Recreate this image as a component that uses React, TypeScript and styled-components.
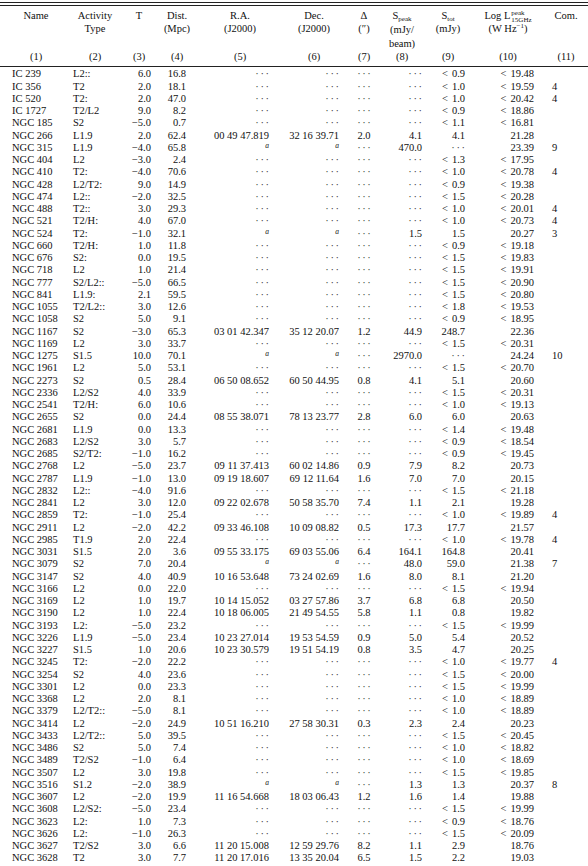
import React from 'react';
import styled, { createGlobalStyle } from 'styled-components';

const COLS = '60px 58px 30px 46px 80px 68px 32px 44px 48px 72px 44px';

type Align = 'left' | 'right' | 'center';

// alignment and inner padding of each data column
const CELLS: { align: Align; pad: number }[] = [
  { align: 'left', pad: 6 },
  { align: 'left', pad: 7 },
  { align: 'right', pad: 3 },
  { align: 'right', pad: 14 },
  { align: 'right', pad: 11 },
  { align: 'right', pad: 9 },
  { align: 'center', pad: 0 },
  { align: 'right', pad: 2 },
  { align: 'right', pad: 7 },
  { align: 'right', pad: 10 },
  { align: 'left', pad: 8 },
];

// "-" = no value (dots), "a" = footnote a
const ROWS: string[] = [
  'IC 239|L2::|6.0|16.8|-|-|-|-|< 0.9|< 19.48|',
  'IC 356|T2|2.0|18.1|-|-|-|-|< 1.0|< 19.59|4',
  'IC 520|T2:|2.0|47.0|-|-|-|-|< 1.0|< 20.42|4',
  'IC 1727|T2/L2|9.0|8.2|-|-|-|-|< 0.9|< 18.86|',
  'NGC 185|S2|−5.0|0.7|-|-|-|-|< 1.1|< 16.81|',
  'NGC 266|L1.9|2.0|62.4|00 49 47.819|32 16 39.71|2.0|4.1|4.1|21.28|',
  'NGC 315|L1.9|−4.0|65.8|a|a|-|470.0|-|23.39|9',
  'NGC 404|L2|−3.0|2.4|-|-|-|-|< 1.3|< 17.95|',
  'NGC 410|T2:|−4.0|70.6|-|-|-|-|< 1.0|< 20.78|4',
  'NGC 428|L2/T2:|9.0|14.9|-|-|-|-|< 0.9|< 19.38|',
  'NGC 474|L2::|−2.0|32.5|-|-|-|-|< 1.5|< 20.28|',
  'NGC 488|T2::|3.0|29.3|-|-|-|-|< 1.0|< 20.01|4',
  'NGC 521|T2/H:|4.0|67.0|-|-|-|-|< 1.0|< 20.73|4',
  'NGC 524|T2:|−1.0|32.1|a|a|-|1.5|1.5|20.27|3',
  'NGC 660|T2/H:|1.0|11.8|-|-|-|-|< 0.9|< 19.18|',
  'NGC 676|S2:|0.0|19.5|-|-|-|-|< 1.5|< 19.83|',
  'NGC 718|L2|1.0|21.4|-|-|-|-|< 1.5|< 19.91|',
  'NGC 777|S2/L2::|−5.0|66.5|-|-|-|-|< 1.5|< 20.90|',
  'NGC 841|L1.9:|2.1|59.5|-|-|-|-|< 1.5|< 20.80|',
  'NGC 1055|T2/L2::|3.0|12.6|-|-|-|-|< 1.8|< 19.53|',
  'NGC 1058|S2|5.0|9.1|-|-|-|-|< 0.9|< 18.95|',
  'NGC 1167|S2|−3.0|65.3|03 01 42.347|35 12 20.07|1.2|44.9|248.7|22.36|',
  'NGC 1169|L2|3.0|33.7|-|-|-|-|< 1.5|< 20.31|',
  'NGC 1275|S1.5|10.0|70.1|a|a|-|2970.0|-|24.24|10',
  'NGC 1961|L2|5.0|53.1|-|-|-|-|< 1.5|< 20.70|',
  'NGC 2273|S2|0.5|28.4|06 50 08.652|60 50 44.95|0.8|4.1|5.1|20.60|',
  'NGC 2336|L2/S2|4.0|33.9|-|-|-|-|< 1.5|< 20.31|',
  'NGC 2541|T2/H:|6.0|10.6|-|-|-|-|< 1.0|< 19.13|',
  'NGC 2655|S2|0.0|24.4|08 55 38.071|78 13 23.77|2.8|6.0|6.0|20.63|',
  'NGC 2681|L1.9|0.0|13.3|-|-|-|-|< 1.4|< 19.48|',
  'NGC 2683|L2/S2|3.0|5.7|-|-|-|-|< 0.9|< 18.54|',
  'NGC 2685|S2/T2:|−1.0|16.2|-|-|-|-|< 0.9|< 19.45|',
  'NGC 2768|L2|−5.0|23.7|09 11 37.413|60 02 14.86|0.9|7.9|8.2|20.73|',
  'NGC 2787|L1.9|−1.0|13.0|09 19 18.607|69 12 11.64|1.6|7.0|7.0|20.15|',
  'NGC 2832|L2::|−4.0|91.6|-|-|-|-|< 1.5|< 21.18|',
  'NGC 2841|L2|3.0|12.0|09 22 02.678|50 58 35.70|7.4|1.1|2.1|19.28|',
  'NGC 2859|T2:|−1.0|25.4|-|-|-|-|< 1.0|< 19.89|4',
  'NGC 2911|L2|−2.0|42.2|09 33 46.108|10 09 08.82|0.5|17.3|17.7|21.57|',
  'NGC 2985|T1.9|2.0|22.4|-|-|-|-|< 1.0|< 19.78|4',
  'NGC 3031|S1.5|2.0|3.6|09 55 33.175|69 03 55.06|6.4|164.1|164.8|20.41|',
  'NGC 3079|S2|7.0|20.4|a|a|-|48.0|59.0|21.38|7',
  'NGC 3147|S2|4.0|40.9|10 16 53.648|73 24 02.69|1.6|8.0|8.1|21.20|',
  'NGC 3166|L2|0.0|22.0|-|-|-|-|< 1.5|< 19.94|',
  'NGC 3169|L2|1.0|19.7|10 14 15.052|03 27 57.86|3.7|6.8|6.8|20.50|',
  'NGC 3190|L2|1.0|22.4|10 18 06.005|21 49 54.55|5.8|1.1|0.8|19.82|',
  'NGC 3193|L2:|−5.0|23.2|-|-|-|-|< 1.5|< 19.99|',
  'NGC 3226|L1.9|−5.0|23.4|10 23 27.014|19 53 54.59|0.9|5.0|5.4|20.52|',
  'NGC 3227|S1.5|1.0|20.6|10 23 30.579|19 51 54.19|0.8|3.5|4.7|20.25|',
  'NGC 3245|T2:|−2.0|22.2|-|-|-|-|< 1.0|< 19.77|4',
  'NGC 3254|S2|4.0|23.6|-|-|-|-|< 1.5|< 20.00|',
  'NGC 3301|L2|0.0|23.3|-|-|-|-|< 1.5|< 19.99|',
  'NGC 3368|L2|2.0|8.1|-|-|-|-|< 1.0|< 18.89|',
  'NGC 3379|L2/T2::|−5.0|8.1|-|-|-|-|< 1.0|< 18.89|',
  'NGC 3414|L2|−2.0|24.9|10 51 16.210|27 58 30.31|0.3|2.3|2.4|20.23|',
  'NGC 3433|L2/T2::|5.0|39.5|-|-|-|-|< 1.5|< 20.45|',
  'NGC 3486|S2|5.0|7.4|-|-|-|-|< 1.0|< 18.82|',
  'NGC 3489|T2/S2|−1.0|6.4|-|-|-|-|< 1.0|< 18.69|',
  'NGC 3507|L2|3.0|19.8|-|-|-|-|< 1.5|< 19.85|',
  'NGC 3516|S1.2|−2.0|38.9|a|a|-|1.3|1.3|20.37|8',
  'NGC 3607|L2|−2.0|19.9|11 16 54.668|18 03 06.43|1.2|1.6|1.4|19.88|',
  'NGC 3608|L2/S2:|−5.0|23.4|-|-|-|-|< 1.5|< 19.99|',
  'NGC 3623|L2:|1.0|7.3|-|-|-|-|< 0.9|< 18.76|',
  'NGC 3626|L2:|−1.0|26.3|-|-|-|-|< 1.5|< 20.09|',
  'NGC 3627|T2/S2|3.0|6.6|11 20 15.008|12 59 29.76|8.2|1.1|2.9|18.76|',
  'NGC 3628|T2|3.0|7.7|11 20 17.016|13 35 20.04|6.5|1.5|2.2|19.03|',
];

const GlobalStyle = createGlobalStyle`
  html, body {
    margin: 0;
    padding: 0;
    background: #ffffff;
  }
  body {
    font-family: 'Liberation Serif', 'Times New Roman', serif;
    font-size: 10.5px;
    color: #111111;
  }
`;

const Page = styled.div`
  width: 588px;
  height: 866px;
  overflow: hidden;
`;

const DoubleRule = styled.div`
  margin-top: 2px;
  height: 2px;
  border-top: 1px solid #222;
  border-bottom: 1px solid #222;
`;

const Rule = styled.div`
  height: 0;
  border-top: 1px solid #222;
`;

const Grid = styled.div`
  display: grid;
  grid-template-columns: ${COLS};
  padding-left: 6px;
`;

const HeadRow = styled(Grid)`
  padding-top: 3px;
  height: 40px;
  align-items: start;
`;

const HeadCell = styled.div`
  text-align: center;
  line-height: 13px;
  white-space: nowrap;
`;

const NumRow = styled(Grid)`
  height: 17px;
  line-height: 13px;
  padding-top: 1px;
  box-sizing: border-box;
`;

const NumCell = styled.div`
  text-align: center;
`;

const Body = styled.div`
  padding-top: 1.3px;
`;

const Row = styled(Grid)`
  height: 12.25px;
  line-height: 12.25px;
`;

const Cell = styled.div<{ $align: Align; $pad: number }>`
  text-align: ${(p) => p.$align};
  padding-left: ${(p) => (p.$align === 'left' ? p.$pad : 0)}px;
  padding-right: ${(p) => (p.$align === 'right' ? p.$pad : 0)}px;
  white-space: nowrap;
`;

const Dots = styled.span`
  letter-spacing: 1.6px;
  margin-right: -1.6px;
  color: #333;
`;

const Note = styled.i`
  font-size: 7.5px;
  position: relative;
  top: -3px;
`;

const Lt = styled.span`
  margin-right: 4px;
`;

const Sub = styled.sub`
  font-size: 7px;
  line-height: 0;
  vertical-align: -2px;
`;

const Sup = styled.sup`
  font-size: 7px;
  line-height: 0;
  vertical-align: 4px;
`;

// stacked super/subscript of L (peak over 15GHz)
const Scripts = styled.span`
  display: inline-flex;
  flex-direction: column;
  vertical-align: 4px;
  margin: -6px 0 -6px 1px;
  font-size: 7px;
  line-height: 6.5px;
  text-align: left;
`;

const SpeakCell = styled(HeadCell)`
  line-height: 14px;
`;

function renderValue(v: string) {
  if (v === '-') return <Dots>···</Dots>;
  if (v === 'a') return <Note>a</Note>;
  if (v.startsWith('< '))
    return (
      <>
        <Lt>&lt;</Lt>
        {v.slice(2)}
      </>
    );
  return v;
}

const App: React.FC = () => {
  return (
    <Page>
      <GlobalStyle />
      <DoubleRule />
      <HeadRow>
        <HeadCell>Name</HeadCell>
        <HeadCell>
          Activity
          <br />
          Type
        </HeadCell>
        <HeadCell>T</HeadCell>
        <HeadCell>
          Dist.
          <br />
          (Mpc)
        </HeadCell>
        <HeadCell>
          R.A.
          <br />
          (J2000)
        </HeadCell>
        <HeadCell>
          Dec.
          <br />
          (J2000)
        </HeadCell>
        <HeadCell>
          Δ
          <br />
          (″)
        </HeadCell>
        <SpeakCell>
          S<Sub>peak</Sub>
          <br />
          (mJy/
          <br />
          beam)
        </SpeakCell>
        <HeadCell>
          S<Sub>tot</Sub>
          <br />
          (mJy)
        </HeadCell>
        <HeadCell>
          Log L
          <Scripts>
            <span>peak</span>
            <span>15GHz</span>
          </Scripts>
          <br />
          (W Hz<Sup>−1</Sup>)
        </HeadCell>
        <HeadCell>Com.</HeadCell>
      </HeadRow>
      <NumRow>
        {CELLS.map((_, i) => (
          <NumCell key={i}>({i + 1})</NumCell>
        ))}
      </NumRow>
      <Rule />
      <Body>
        {ROWS.map((line) => {
          const vals = line.split('|');
          return (
            <Row key={vals[0]}>
              {CELLS.map((c, i) => (
                <Cell key={i} $align={c.align} $pad={c.pad}>
                  {renderValue(vals[i] ?? '')}
                </Cell>
              ))}
            </Row>
          );
        })}
      </Body>
    </Page>
  );
};

export default App;
